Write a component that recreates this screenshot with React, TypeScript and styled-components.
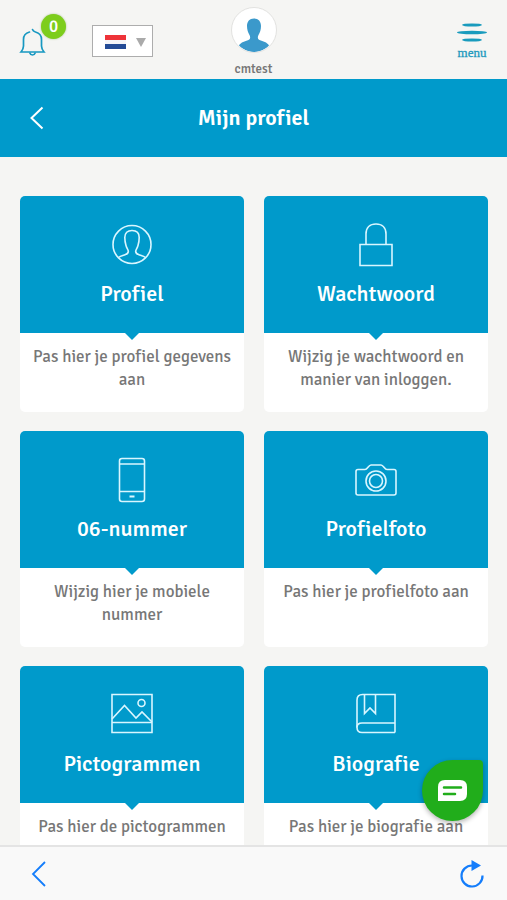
import React from "react";
import styled, { createGlobalStyle } from "styled-components";

const blue = "#009acb";
const paper = "#f5f5f3";
const iosBlue = "#147dfb";

const GlobalStyle = createGlobalStyle`
  * { box-sizing: border-box; }
  body {
    margin: 0;
    background: ${paper};
    font-family: "Signika", "Noto Sans", sans-serif;
    font-variant-ligatures: none;
    color: #777;
  }
  button, select { font: inherit; }
`;

const Screen = styled.div`
  display: flex;
  flex-direction: column;
  height: 100vh;
  overflow: hidden;
  background: ${paper};
`;

const PlainButton = styled.button`
  display: flex;
  align-items: center;
  justify-content: center;
  padding: 0;
  border: 0;
  background: none;
  color: inherit;
  cursor: pointer;
`;

const Header = styled.header`
  display: grid;
  grid-template-columns: 1fr auto 1fr;
  flex: none;
  height: 79px;
  padding: 0 20px;
`;

const HeaderLeft = styled.div`
  display: flex;
  align-items: flex-start;
  gap: 26px;
`;

const BellButton = styled(PlainButton)`
  position: relative;
  align-items: flex-end;
  justify-content: flex-start;
  width: 46px;
  height: 57px;
`;

const Badge = styled.span`
  position: absolute;
  top: 14px;
  right: 0;
  width: 25px;
  height: 25px;
  border-radius: 50%;
  background: #7dcd1c;
  box-shadow: 0 0 2px rgba(80, 140, 20, 0.5);
  color: #fff;
  font-size: 17px;
  font-weight: 500;
  line-height: 25px;
  text-align: center;
`;

const LanguageBox = styled.label`
  position: relative;
  display: flex;
  align-items: center;
  justify-content: space-between;
  width: 61px;
  height: 32px;
  margin-top: 25px;
  padding: 2px 6px 0 12px;
  border: 1px solid #adadad;
  background: #fff;
`;

const LanguageSelect = styled.select`
  position: absolute;
  inset: 0;
  width: 100%;
  opacity: 0;
  cursor: pointer;
`;

const UserLink = styled.a`
  display: flex;
  flex-direction: column;
  align-items: center;
  gap: 8px;
  padding-top: 7px;
  color: #777;
  font-size: 13px;
  font-weight: 500;
  line-height: 16px;
  text-decoration: none;
`;

const Avatar = styled.span`
  display: block;
  width: 46px;
  height: 46px;
  overflow: hidden;
  border: 1px solid #e2e2e0;
  border-radius: 50%;
  background: #fff;
`;

const MenuButton = styled(PlainButton)`
  flex-direction: column;
  justify-self: end;
  justify-content: flex-start;
  gap: 3px;
  padding-top: 23px;
  color: #2199bd;
  font-family: "Liberation Serif", serif;
  font-size: 13px;
  line-height: 16px;
  -webkit-text-stroke: 0.3px currentColor;
`;

const TitleBar = styled.div`
  display: grid;
  grid-template-columns: 34px 1fr 34px;
  align-items: center;
  flex: none;
  height: 78px;
  padding: 0 20px;
  background: ${blue};
  color: #fff;
`;

const Title = styled.h1`
  margin: 0;
  font-size: 22px;
  font-weight: 600;
  line-height: 28px;
  text-align: center;
`;

const Content = styled.main`
  flex: 1;
  min-height: 0;
  overflow-y: auto;
  padding: 39px 19px 20px 20px;
  scrollbar-width: none;
`;

const CardGrid = styled.div`
  display: grid;
  grid-template-columns: 1fr 1fr;
  gap: 19px 20px;
`;

const Card = styled.a`
  display: flex;
  flex-direction: column;
  min-height: 216px;
  overflow: hidden;
  border-radius: 5px;
  background: #fff;
  color: #777;
  text-decoration: none;
`;

const CardTop = styled.div`
  position: relative;
  display: flex;
  flex-direction: column;
  align-items: center;
  height: 137px;
  padding-top: 24px;
  background: ${blue};
  color: #fff;

  &::after {
    content: "";
    position: absolute;
    top: 100%;
    left: calc(50% - 7px);
    border: 7px solid transparent;
    border-top-color: ${blue};
    border-bottom: 0;
  }
`;

const CardTitle = styled.h2`
  margin: 10px 0 0;
  font-size: 22px;
  font-weight: 500;
  line-height: 28px;
`;

const CardText = styled.p`
  margin: 0;
  padding: 12px;
  font-size: 17px;
  font-weight: 400;
  line-height: 23px;
  text-align: center;
`;

const ChatButton = styled(PlainButton)`
  position: fixed;
  right: 24px;
  bottom: 79px;
  width: 61px;
  height: 61px;
  border-radius: 50% 4px 50% 50%;
  background: #21ad1b;
  box-shadow: 0 2px 5px rgba(0, 0, 0, 0.3);
`;

const BrowserBar = styled.nav`
  display: flex;
  align-items: center;
  justify-content: space-between;
  flex: none;
  height: 55px;
  padding: 0 22px;
  border-top: 2px solid #e4e4e4;
  background: #f9f9f9;
`;

const Glyph = styled.svg`
  display: block;
  flex: none;
  overflow: visible;
`;

const CardIcon = ({ children }: { children: React.ReactNode }) => (
  <Glyph width="50" height="50" viewBox="0 0 50 50" fill="none" stroke="#d9f6ff" strokeWidth="1.6" aria-hidden="true">
    {children}
  </Glyph>
);

const icons: Record<string, React.ReactNode> = {
  profile: (
    <>
      <circle cx="25" cy="24.500" r="19" />
      <path d="M11.500 37.500C13 36.300 15 35.800 18 34.800C21 33.800 21.500 33 21.300 31C21.100 29.500 19.800 28.300 19 25.500C18.200 22.800 17.800 20 17.800 17.500C17.800 12.800 20.500 10.500 25 10.500S32.200 12.800 32.200 17.500C32.200 20 31.800 22.800 31 25.500C30.200 28.300 28.900 29.500 28.700 31C28.500 33 29 33.800 32 34.800C35 35.800 37 36.300 38.500 37.500" />
    </>
  ),
  lock: (
    <>
      <path d="M9 24.500H41V45.500H9Z" />
      <path d="M15 24V14C15 7.500 19 4 25 4S35 7.500 35 14V24" />
    </>
  ),
  phone: (
    <>
      <rect x="12.500" y="3.500" width="25" height="43" rx="2.500" />
      <path d="M12.500 9H37.500M12.500 36.500H37.500" />
      <path d="M22.500 41.500H27.500" strokeWidth="2" />
    </>
  ),
  camera: (
    <>
      <path d="M7 14.500H14C16.500 14.500 17.500 10 20 10H30C32.500 10 33.500 14.500 36 14.500H43Q45 14.500 45 16.500V38Q45 40 43 40H7Q5 40 5 38V16.500Q5 14.500 7 14.500Z" />
      <circle cx="25" cy="26" r="10" />
      <circle cx="25" cy="26" r="6.500" />
    </>
  ),
  picture: (
    <>
      <path d="M5 4.500H45V42.500H5ZM5 32.500H45" />
      <path d="M5 29L17.500 15.500L29 28L35 22L45 32" />
      <circle cx="34.500" cy="13" r="3.500" />
    </>
  ),
  book: (
    <>
      <path d="M44 42.500H11C8 42.500 6 40.500 6 37.500V10C6 6.500 8 4.500 11.500 4.500H44V42.500" />
      <path d="M6 37.500C6 34.500 8 33 11 33H44" />
      <path d="M13.500 4.500V23.500L19 18L24.500 23.500V4.500" />
    </>
  ),
};

const cards = [
  { icon: "profile", title: "Profiel", text: "Pas hier je profiel gegevens aan" },
  { icon: "lock", title: "Wachtwoord", text: "Wijzig je wachtwoord en manier van inloggen." },
  { icon: "phone", title: "06-nummer", text: "Wijzig hier je mobiele nummer" },
  { icon: "camera", title: "Profielfoto", text: "Pas hier je profielfoto aan" },
  { icon: "picture", title: "Pictogrammen", text: "Pas hier de pictogrammen" },
  { icon: "book", title: "Biografie", text: "Pas hier je biografie aan" },
];

export default function App() {
  return (
    <Screen>
      <GlobalStyle />
      <Header>
        <HeaderLeft>
          <BellButton aria-label="Meldingen">
            <Glyph width="25" height="29" viewBox="0 0 25 29" fill="none" stroke="#1798c1" strokeWidth="1.700" aria-hidden="true">
              <path d="M9.500 4C5.500 5 3.500 8 3.500 11.500V18C3.500 20.500 3 21.500 1 24H24C22 21.500 21.500 20.500 21.500 18V11.500C21.500 8 19.500 5 15.500 4C14 3.500 13 3 12.500 1.500" strokeLinecap="round" />
              <path d="M9.500 24.500Q10.500 27 12.500 27T15.500 24.500" />
            </Glyph>
            <Badge>0</Badge>
          </BellButton>
          <LanguageBox>
            <Glyph width="21" height="14" viewBox="0 0 21 14" aria-hidden="true">
              <rect width="21" height="5" fill="#ee3339" />
              <rect y="5" width="21" height="4" fill="#f4f4f8" />
              <rect y="9" width="21" height="5" fill="#244b96" />
            </Glyph>
            <Glyph width="10" height="9" viewBox="0 0 10 9" aria-hidden="true">
              <path d="M0 0H10L5 9Z" fill="#aaa" />
            </Glyph>
            <LanguageSelect aria-label="Taal" defaultValue="nl">
              <option value="nl" aria-label="Nederlands" />
            </LanguageSelect>
          </LanguageBox>
        </HeaderLeft>
        <UserLink href="#profiel">
          <Avatar>
            <Glyph width="44" height="44" viewBox="0 0 44 44" aria-hidden="true">
              <path
                d="M22 10.500C26.500 10.500 29 13.500 29 18C29 21.500 28 24.500 26.500 27C25.500 29 25.500 31 27.500 32C31 33.500 35 34 37 37.500C33 41.500 28 44 22 44S11 41.500 7 37.500C9 34 13 33.500 16.500 32C18.500 31 18.500 29 17.500 27C16 24.500 15 21.500 15 18C15 13.500 17.500 10.500 22 10.500Z"
                fill="#3b99cb"
              />
            </Glyph>
          </Avatar>
          cmtest
        </UserLink>
        <MenuButton>
          <Glyph width="30" height="19" viewBox="0 0 30 19" fill="#199bbd" aria-hidden="true">
            <ellipse cx="15" cy="2" rx="10" ry="1.600" />
            <ellipse cx="15" cy="9.500" rx="15" ry="1.700" />
            <ellipse cx="15" cy="17" rx="10" ry="1.600" />
          </Glyph>
          menu
        </MenuButton>
      </Header>

      <TitleBar>
        <PlainButton aria-label="Terug">
          <Glyph width="14" height="24" viewBox="0 0 14 24" fill="none" stroke="#fff" strokeWidth="2" aria-hidden="true">
            <path d="M12.500 1.500L1.500 12L12.500 22.500" />
          </Glyph>
        </PlainButton>
        <Title>Mijn profiel</Title>
      </TitleBar>

      <Content>
        <CardGrid>
          {cards.map((card) => (
            <Card key={card.title} href={`#${card.icon}`}>
              <CardTop>
                <CardIcon>{icons[card.icon]}</CardIcon>
                <CardTitle>{card.title}</CardTitle>
              </CardTop>
              <CardText>{card.text}</CardText>
            </Card>
          ))}
        </CardGrid>
      </Content>

      <ChatButton aria-label="Chat openen">
        <Glyph width="29" height="21" viewBox="0 0 29 21" aria-hidden="true">
          <path d="M7 0H22Q29 0 29 7V14Q29 21 22 21H0V7Q0 0 7 0Z" fill="#fff" />
          <path d="M6 7.500H23M6 14H17" stroke="#21ad1b" strokeWidth="2.500" strokeLinecap="round" />
        </Glyph>
      </ChatButton>

      <BrowserBar aria-label="Browser">
        <PlainButton aria-label="Vorige">
          <Glyph width="34" height="26" viewBox="0 0 34 26" fill="none" stroke={iosBlue} strokeWidth="1.800" aria-hidden="true">
            <path d="M23 1L11 13L23 25" />
          </Glyph>
        </PlainButton>
        <PlainButton aria-label="Vernieuwen">
          <Glyph width="26" height="28" viewBox="0 0 26 28" fill="none" stroke={iosBlue} strokeWidth="2.200" aria-hidden="true">
            <path d="M23.500 15.500A10.500 10.500 0 1 1 13 5.500" />
            <path d="M12.500 0L22 5.500L12.500 11Z" fill={iosBlue} stroke="none" />
          </Glyph>
        </PlainButton>
      </BrowserBar>
    </Screen>
  );
}
